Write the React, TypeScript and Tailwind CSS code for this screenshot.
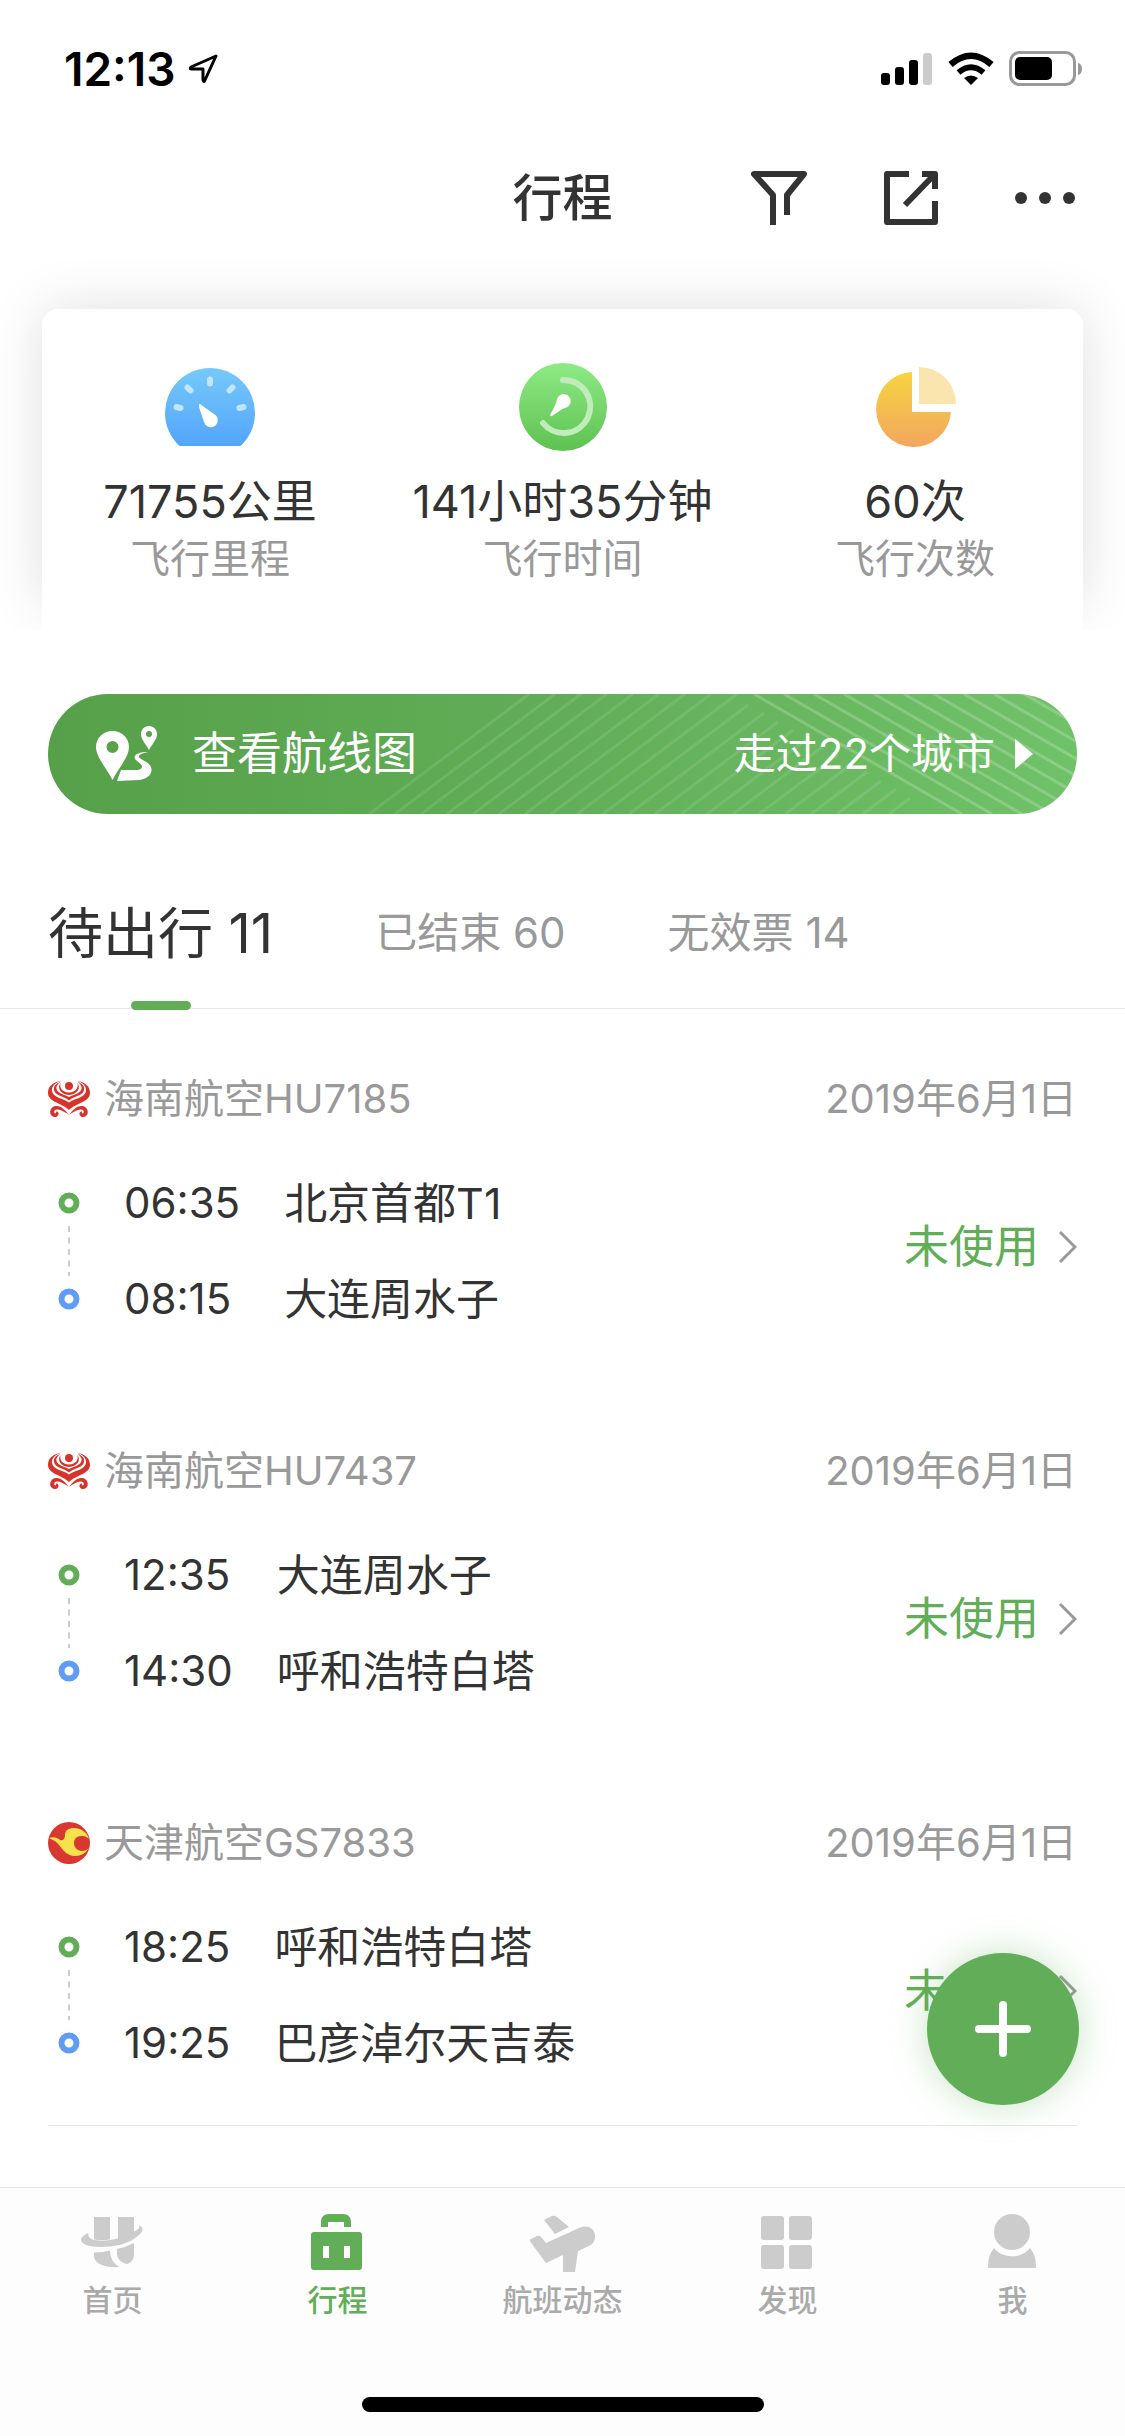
import type { ReactNode } from 'react'

interface Flight {
  id: string
  logo: ReactNode
  airline: string
  date: string
  from: { time: string; place: string }
  to: { time: string; place: string }
  status: string
}

function HainanLogo() {
  return (
    <svg viewBox="0 0 42 38" className="w-[42px] h-[38px]" fill="#d8332b">
      <circle cx="21" cy="6" r="4" />
      <path d="M13 .7C4 2 0 7 0 13c0 9 14 10 21 17 7-7 21-8 21-17C42 7 38 2 29 .7 36 3 38.500 7 38 11c-1 7-11 7-17 11.500C15 18 5 18 4 11 3.500 7 6 3 13 .7z" />
      <path d="M13 1.500C6.500 4 5.500 7 6 10c1 6 10 6 15 10.500C26 16 35 16 36 10c.5-3-.5-6-7-8.500C33 4 34 7 33.500 9 32 14 25 14.500 21 17c-4-2.500-11-3-12.500-8C8 7 9 4 13 1.500z" />
      <path d="M12.500 3C9 8 12 14 21 15c9-1 12-7 8.500-12C30.500 8 28 12 21 12.500 14 12 11.500 8 12.500 3z" />
      <path d="M21 35c-4-5-8-9.500-13-9C3 26.500 1.500 31 2.500 34c1.500 4 7 4 8 .5.500-2-1-3.500-2.500-3 .5 1.500-.5 2.500-1.500 1.500C5.500 31 7 29 10 29.500c4 .5 8 3.500 11 5.500z" />
      <path d="M21 35c4-5 8-9.500 13-9 5 .5 6.500 5 5.500 8-1.500 4-7 4-8 .5-.5-2 1-3.500 2.500-3-.5 1.500.5 2.500 1.500 1.500C36.500 31 35 29 32 29.500c-4 .5-8 3.500-11 5.500z" />
    </svg>
  )
}

function TianjinLogo() {
  return (
    <svg viewBox="0 0 42 42" className="w-[42px] h-[42px]">
      <circle cx="21" cy="21" r="21" fill="#d93832" />
      <path
        d="M1 16c5-2 9 0 11 2 3 1 5-1 5-5 0-5 4-7 9-7 7 0 13 4 15 11-3-3-5-3-8-3-4 0-7 3-7 7s3 8 8 8c3 0 5-1 7-3-3 5-8 8-14 8-8 0-12-6-16-11-3-4-6-5-10-7z"
        fill="#f8e24c"
      />
    </svg>
  )
}

const FLIGHTS: Flight[] = [
  {
    id: 'HU7185',
    logo: <HainanLogo />,
    airline: '海南航空HU7185',
    date: '2019年6月1日',
    from: { time: '06:35', place: '北京首都T1' },
    to: { time: '08:15', place: '大连周水子' },
    status: '未使用',
  },
  {
    id: 'HU7437',
    logo: <HainanLogo />,
    airline: '海南航空HU7437',
    date: '2019年6月1日',
    from: { time: '12:35', place: '大连周水子' },
    to: { time: '14:30', place: '呼和浩特白塔' },
    status: '未使用',
  },
  {
    id: 'GS7833',
    logo: <TianjinLogo />,
    airline: '天津航空GS7833',
    date: '2019年6月1日',
    from: { time: '18:25', place: '呼和浩特白塔' },
    to: { time: '19:25', place: '巴彦淖尔天吉泰' },
    status: '未使用',
  },
]

const STATS = [
  {
    value: '71755公里',
    label: '飞行里程',
    icon: (
      <svg viewBox="0 0 90 90" className="w-[90px] h-[90px]">
        <defs>
          <linearGradient id="gauge" x1="0" y1="0" x2="0" y2="1">
            <stop offset="0" stopColor="#76c9f8" />
            <stop offset="1" stopColor="#53a5fb" />
          </linearGradient>
        </defs>
        <path d="M14.500 84A45 45 0 1 1 75.500 84z" fill="url(#gauge)" />
        <g stroke="#c3e4fd" strokeWidth="6" strokeLinecap="round">
          <path d="M45 17.500v4M22.500 25.500l3 3M67.500 25.500l-3 3M11.500 45l4 1M78.500 45l-4 1" />
        </g>
        <path d="M34 42.500c1-1 2 0 3 1l12 8.500a7 7 0 1 1-10 8l-5-15z" fill="#fff" />
      </svg>
    ),
  },
  {
    value: '141小时35分钟',
    label: '飞行时间',
    icon: (
      <svg viewBox="0 0 90 90" className="w-[90px] h-[90px]">
        <defs>
          <linearGradient id="clock" x1="0" y1="0" x2="0" y2="1">
            <stop offset="0" stopColor="#8deb84" />
            <stop offset="1" stopColor="#5fc152" />
          </linearGradient>
        </defs>
        <circle cx="45" cy="45" r="44" fill="url(#clock)" />
        <path
          d="M45 18a26.500 26.500 0 1 1-20 43"
          fill="none"
          stroke="#bfecba"
          strokeWidth="6"
          strokeLinecap="round"
        />
        <path d="M39 37a7 7 0 1 1 8 9c-4 1-8 5-13 8-2 1-2-1-1-3 3-5 5-9 6-14z" fill="#fff" />
      </svg>
    ),
  },
  {
    value: '60次',
    label: '飞行次数',
    icon: (
      <svg viewBox="0 0 90 90" className="w-[90px] h-[90px]">
        <defs>
          <linearGradient id="pie" x1="0" y1="0" x2="0" y2="1">
            <stop offset="0" stopColor="#f7d440" />
            <stop offset="1" stopColor="#f2a65f" />
          </linearGradient>
        </defs>
        <path d="M42 10A37.500 37.500 0 1 0 81 50H42z" fill="url(#pie)" />
        <path d="M49 5v37h37A37 37 0 0 0 49 5z" fill="#fae5ae" />
      </svg>
    ),
  },
]

const TABS = [
  { name: '待出行', count: 11, active: true },
  { name: '已结束', count: 60, active: false },
  { name: '无效票', count: 14, active: false },
]

const NAV = [
  {
    label: '首页',
    active: false,
    icon: (
      <>
        <path d="M15 5h16v22.500q-8 1.500-16 0zM39 5h16v15q-7 5-16 7z" />
        <path d="M9.500 21c-1 3 1 6 6 7 12 2 23-1 32-5 7-3 15-6 12.500-10 4 2 5 5 1 9-7 7-17 11-29 12.500-10 1-20 .5-25-1.500-7-3-7-8 2.500-12z" />
        <path d="M15 40.500q9 0 16-2c0 7 3 13 9.500 16.500-14 1-25.500-3-25.500-11zM38 37q9-2 17-6v12c0 4-3 8-7 9-6-1-10-6-10-10z" />
      </>
    ),
  },
  {
    label: '行程',
    active: true,
    icon: (
      <>
        <path d="M17 15V10c0-5 3-8 8-8h14c5 0 8 3 8 8v5h-7v-5H24v5z" />
        <path
          fillRule="evenodd"
          d="M10 20h45q3 0 3 3v32q0 3-3 3H10q-3 0-3-3V23q0-3 3-3zM19 34v12h6V34zM40 34v12h6V34z"
        />
      </>
    ),
  },
  {
    label: '航班动态',
    active: false,
    icon: (
      <path d="M15 8l8-4q3-1 5 1l12 10-14 7zM0 28l8-4q2-1 4 1l5 6 33-15c8-4 16 0 16 8 0 5-2 8-6 10l-11 5-3 21-12 5V43l-17 8z" />
    ),
  },
  {
    label: '发现',
    active: false,
    icon: (
      <>
        <rect x="7" y="4" width="23" height="24" rx="3" />
        <rect x="35" y="4" width="23" height="24" rx="3" />
        <rect x="7" y="33" width="23" height="24" rx="3" />
        <rect x="35" y="33" width="23" height="24" rx="3" />
      </>
    ),
  },
  {
    label: '我',
    active: false,
    icon: (
      <>
        <circle cx="33" cy="20" r="18" />
        <path d="M15 36c8 11 28 11 36 0 4 5 6 11 6 20H9c0-9 2-15 6-20z" />
      </>
    ),
  },
]

// 横幅左侧斜线的起点, 超出交界线的部分在中途截断
const STRIPES = Array.from({ length: 21 }, (_, i) => {
  const x = 321 + i * 26
  const top = i < 9 ? 0 : Math.round((0.57 * (x - 537) + 9) / 1.76)
  return { x, top, dx: Math.round(((120 - top) * 4) / 3) }
})

function StatusBar() {
  return (
    <div className="h-[138px] pl-16 pr-[42px] flex items-center justify-between text-black">
      <div className="flex items-center gap-3">
        <span className="text-[46px] leading-[54px] font-semibold">12:13</span>
        <svg viewBox="0 0 30 30" className="w-[30px] h-[30px]" fill="none" stroke="#000" strokeWidth="3">
          <path d="M28 2L3 13q-2 2 1 2h11v11q1 3 2 0z" strokeLinejoin="round" />
        </svg>
      </div>
      <div className="flex items-center gap-[15px]">
        <svg viewBox="0 0 52 34" className="w-[52px] h-[34px]">
          <rect x="0" y="21" width="9" height="12" rx="3" />
          <rect x="14" y="15" width="9" height="18" rx="3" />
          <rect x="28" y="8" width="9" height="25" rx="3" />
          <rect x="42" y="1" width="9" height="32" rx="3" fill="#ccc" />
        </svg>
        <svg viewBox="0 0 46 34" className="w-[46px] h-[34px]">
          <path d="M23 33l-7-7q7-5 14 0z" />
          <path d="M10.500 20.500q12.500-10.500 25 0" fill="none" stroke="#000" strokeWidth="6" />
          <path d="M2.500 12.500q20.500-17.500 41 0" fill="none" stroke="#000" strokeWidth="6.500" />
        </svg>
        <svg viewBox="0 0 74 36" className="w-[74px] h-[36px]">
          <rect x="1.500" y="1.500" width="64" height="32" rx="9" fill="none" stroke="#999" strokeWidth="3" />
          <rect x="6" y="6" width="37" height="23" rx="5" />
          <path d="M69 12q4 1 4 6t-4 6z" fill="#999" />
        </svg>
      </div>
    </div>
  )
}

function Header() {
  return (
    <header className="h-[120px] px-12 grid grid-cols-3 items-center text-[#333]">
      <h1 className="col-start-2 text-center text-[50px] leading-[60px] font-medium">行程</h1>
      <div className="flex items-center justify-end gap-[74px]">
        <button type="button" aria-label="筛选">
          <svg viewBox="0 0 60 56" className="w-[60px] h-[56px]" fill="none" stroke="currentColor" strokeWidth="6">
            <path d="M24 55V25L5 4h50L38 25v20" strokeLinejoin="round" />
          </svg>
        </button>
        <button type="button" aria-label="分享">
          <svg viewBox="0 0 56 56" className="w-[56px] h-[56px]" fill="none" stroke="currentColor" strokeWidth="6">
            <path d="M26 4H4v48h48V31M39 4h13v15M51 5L22 35" strokeLinejoin="round" />
          </svg>
        </button>
        <button type="button" aria-label="更多">
          <svg viewBox="0 0 64 56" className="w-[64px] h-[56px]" fill="currentColor">
            <circle cx="8" cy="28" r="6" />
            <circle cx="32" cy="28" r="6" />
            <circle cx="56" cy="28" r="6" />
          </svg>
        </button>
      </div>
    </header>
  )
}

function StatsCard() {
  return (
    <section className="px-[42px] pt-[51px] overflow-hidden">
      <div className="relative">
        <div className="absolute inset-x-0 top-0 bottom-6 rounded-2xl shadow-[0_0_56px_rgba(0,0,0,0.13)]" />
        <div className="relative bg-white rounded-t-2xl px-4 pt-[53px] pb-11 grid grid-cols-[304px_1fr_304px]">
          {STATS.map((stat) => (
            <div key={stat.label} className="flex flex-col items-center">
              {stat.icon}
              <div className="mt-5 text-[45px] leading-[60px] text-[#333]">{stat.value}</div>
              <div className="text-[40px] leading-[54px] text-[#999]">{stat.label}</div>
            </div>
          ))}
        </div>
      </div>
    </section>
  )
}

function RouteBanner() {
  return (
    <div className="px-12 pt-16">
      <a
        href="#routes"
        className="relative h-[120px] pl-12 pr-11 rounded-full overflow-hidden bg-linear-to-r from-[#55a048] via-[#62ae58] to-[#70c269] text-white flex items-center"
      >
        <svg
          viewBox="0 0 1029 120"
          preserveAspectRatio="xMaxYMid slice"
          className="absolute inset-0 w-full h-full"
          fill="none"
          stroke="#fff"
          strokeWidth="3"
        >
          {STRIPES.map(({ x, top, dx }) => (
            <path key={x} d={`M${x} 120L${x + dx} ${top}`} strokeOpacity="0.1" />
          ))}
          {Array.from({ length: 10 }, (_, i) => (
            <path key={i} d={`M${706 + i * 30} 0l208 120`} strokeOpacity="0.2" />
          ))}
        </svg>
        <svg viewBox="0 0 62 56" className="relative w-[62px] h-[56px]" fill="currentColor">
          <path
            fillRule="evenodd"
            d="M16.500 5C7 5 0 12 0 21c0 10 11 22 16.500 33C22 43 33 31 33 21c0-9-7-16-16.500-16zM16.500 15a6 6 0 1 1 0 12 6 6 0 0 1 0-12z"
          />
          <path
            fillRule="evenodd"
            d="M53 0c-5 0-8 4-8 8 0 6 5 10 8 16 3-6 8-10 8-16 0-4-3-8-8-8zM53 5a3 3 0 1 1 0 6 3 3 0 0 1 0-6z"
          />
          <path d="M52 26C44 26 39 28 38.500 31c0 4 7.500 6 7.500 9.500 0 2.500-3 3.500-5 3.500H25l-4 11 22-1c8-1 13-5 12.500-11C55 36 44 34 43 31c-.5-2.500 4-4 9-5z" />
        </svg>
        <span className="relative ml-[34px] text-[45px] leading-[60px]">查看航线图</span>
        <span className="relative ml-auto text-[42px] leading-[60px]">走过22个城市</span>
        <svg viewBox="0 0 18 30" className="relative ml-5 w-[18px] h-[30px]" fill="currentColor">
          <path d="M0 0l18 15L0 30z" />
        </svg>
      </a>
    </div>
  )
}

function Tabs() {
  return (
    <div className="mt-[66px] h-[129px] px-12 border-b border-[#e8e8e8] flex gap-[102px]">
      {TABS.map((tab) => (
        <button
          key={tab.name}
          type="button"
          className={
            tab.active
              ? 'relative h-[106px] text-[55px] leading-[60px] text-[#333]'
              : 'h-[106px] text-[42px] leading-[60px] text-[#999]'
          }
        >
          {tab.name} {tab.count}
          {tab.active && (
            <span className="absolute left-1/2 -bottom-6 w-[60px] h-[9px] -ml-[30px] rounded-full bg-[#62ae58]" />
          )}
        </button>
      ))}
    </div>
  )
}

function FlightItem({ flight }: { flight: Flight }) {
  return (
    <li className="h-[372px] pt-[60px]">
      <div className="flex items-center text-[40px] leading-[60px] text-[#999]">
        {flight.logo}
        <span className="ml-[14px]">{flight.airline}</span>
        <time className="ml-auto">{flight.date}</time>
      </div>

      <div className="mt-11 flex items-center">
        {/* 起降时间轴 */}
        <svg viewBox="0 0 42 144" className="w-[42px] h-[144px]" fill="none">
          <circle cx="21" cy="24" r="7.500" stroke="#62ae58" strokeWidth="6" />
          <path d="M21 47v50" stroke="#ccc" strokeWidth="2" strokeDasharray="6 5.500" />
          <circle cx="21" cy="120" r="7.500" stroke="#5e9cf5" strokeWidth="6" />
        </svg>
        <div className="ml-[34px] grid grid-cols-[auto_auto] gap-x-[44px] gap-y-9 text-[42px] leading-[60px] text-[#333]">
          <span>{flight.from.time}</span>
          <span className="text-[43px]">{flight.from.place}</span>
          <span>{flight.to.time}</span>
          <span className="text-[43px]">{flight.to.place}</span>
        </div>
        <a href={`#${flight.id}`} className="ml-auto pb-2 flex items-center gap-[18px] text-[45px] leading-[60px] text-[#62ae58]">
          {flight.status}
          <svg viewBox="0 0 20 34" className="w-[20px] h-[34px]" fill="none" stroke="#999" strokeWidth="3">
            <path d="M3 2l15 15L3 32" />
          </svg>
        </a>
      </div>
    </li>
  )
}

function BottomNav() {
  return (
    <nav className="fixed inset-x-0 bottom-0 bg-[#fdfdfd] border-t border-[#e8e8e8]">
      <div className="h-[209px] pt-6 grid grid-cols-5">
        {NAV.map((item) => (
          <a
            key={item.label}
            href="#nav"
            className={
              item.active
                ? 'flex flex-col items-center text-[#62ae58]'
                : 'flex flex-col items-center text-[#aaa]'
            }
          >
            <svg
              viewBox="1 0 66 60"
              className="w-[66px] h-[60px]"
              fill={item.active ? '#62ae58' : '#ccc'}
            >
              {item.icon}
            </svg>
            <span className="mt-2 text-[30px] leading-10 font-medium">{item.label}</span>
          </a>
        ))}
      </div>
      <div className="mx-auto mb-6 w-[402px] h-[15px] rounded-full bg-black" />
    </nav>
  )
}

export default function App() {
  return (
    <div className="min-h-screen bg-white font-[Inter,'Noto_Sans_CJK_SC',sans-serif]">
      <StatusBar />
      <Header />
      <main className="pb-[250px]">
        <StatsCard />
        <RouteBanner />
        <Tabs />
        <ul className="mx-12 border-b border-[#e8e8e8]">
          {FLIGHTS.map((flight) => (
            <FlightItem key={flight.id} flight={flight} />
          ))}
        </ul>
      </main>

      {/* 添加行程 */}
      <button
        type="button"
        aria-label="添加行程"
        className="fixed right-[46px] bottom-[331px] w-[152px] h-[152px] rounded-full bg-[#62ae58] shadow-[0_0_36px_rgba(98,174,88,0.35)] flex items-center justify-center"
      >
        <svg viewBox="0 0 56 56" className="w-[56px] h-[56px]" stroke="#fff" strokeWidth="8" strokeLinecap="round">
          <path d="M28 4v48M4 28h48" />
        </svg>
      </button>
      <BottomNav />
    </div>
  )
}
